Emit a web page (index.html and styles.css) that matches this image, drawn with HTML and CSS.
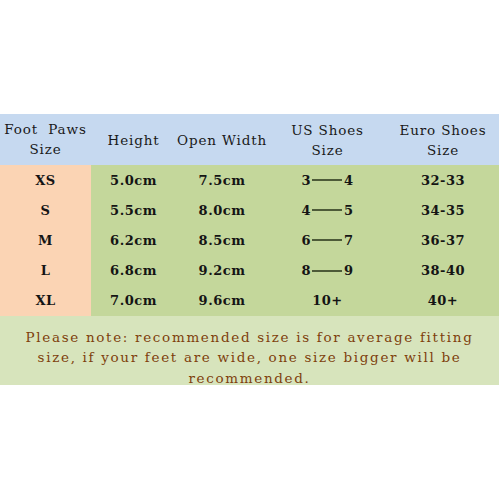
FILE: index.html
```html
<!DOCTYPE html>
<html>
<head>
<meta charset="utf-8">
<link rel="stylesheet" href="styles.css">
</head>
<body>
<div class="sheet">
  <div class="grid">
    <div class="h c1">Foot&nbsp;&nbsp;Paws<br>Size</div>
    <div class="h">Height</div>
    <div class="h">Open Width</div>
    <div class="h">US Shoes<br>Size</div>
    <div class="h">Euro Shoes<br>Size</div>

    <div class="s">XS</div><div class="d">5.0cm</div><div class="d">7.5cm</div><div class="d us">3<span class="dash"></span>4</div><div class="d">32-33</div>
    <div class="s">S</div><div class="d">5.5cm</div><div class="d">8.0cm</div><div class="d us">4<span class="dash"></span>5</div><div class="d">34-35</div>
    <div class="s">M</div><div class="d">6.2cm</div><div class="d">8.5cm</div><div class="d us">6<span class="dash"></span>7</div><div class="d">36-37</div>
    <div class="s">L</div><div class="d">6.8cm</div><div class="d">9.2cm</div><div class="d us">8<span class="dash"></span>9</div><div class="d">38-40</div>
    <div class="s">XL</div><div class="d">7.0cm</div><div class="d">9.6cm</div><div class="d">10+</div><div class="d">40+</div>
  </div>
  <div class="note">Please note: recommended size is for average fitting<br>size, if your feet are wide, one size bigger will be<br>recommended.</div>
</div>
</body>
</html>
```
FILE: styles.css
```css
html, body {
  margin: 0;
  padding: 0;
  background: #ffffff;
}
body {
  width: 500px;
  height: 500px;
  font-family: "DejaVu Serif", "Liberation Serif", serif;
  color: #111;
}
.sheet {
  padding-top: 114px;
  width: 499px;
}
.grid {
  display: grid;
  grid-template-columns: 91px 85px 92px 119px 112px;
  grid-template-rows: 51px repeat(5, 30.2px);
}
.h {
  background: #c6d9f0;
  display: flex;
  align-items: center;
  justify-content: center;
  text-align: center;
  font-size: 13.5px;
  letter-spacing: 0.85px;
  line-height: 20px;
  color: #1a1a1a;
  white-space: nowrap;
}
.h.c1 {
  padding-bottom: 2px;
}
.s, .d {
  display: flex;
  align-items: center;
  justify-content: center;
  font-size: 13px;
  letter-spacing: 0.5px;
  font-weight: bold;
  color: #141414;
}
.s {
  background: #fbd4b4;
}
.d {
  background: #c4d79b;
}
.dash {
  display: inline-block;
  width: 30px;
  height: 2px;
  background: #4d5a38;
  margin: 0 2px 0 1px;
}
.note {
  background: #d7e4bc;
  color: #7e3f0c;
  font-size: 13.5px;
  letter-spacing: 1.68px;
  line-height: 20.5px;
  text-align: center;
  white-space: nowrap;
  padding: 11px 0 6px;
  height: 52px;
}
```
